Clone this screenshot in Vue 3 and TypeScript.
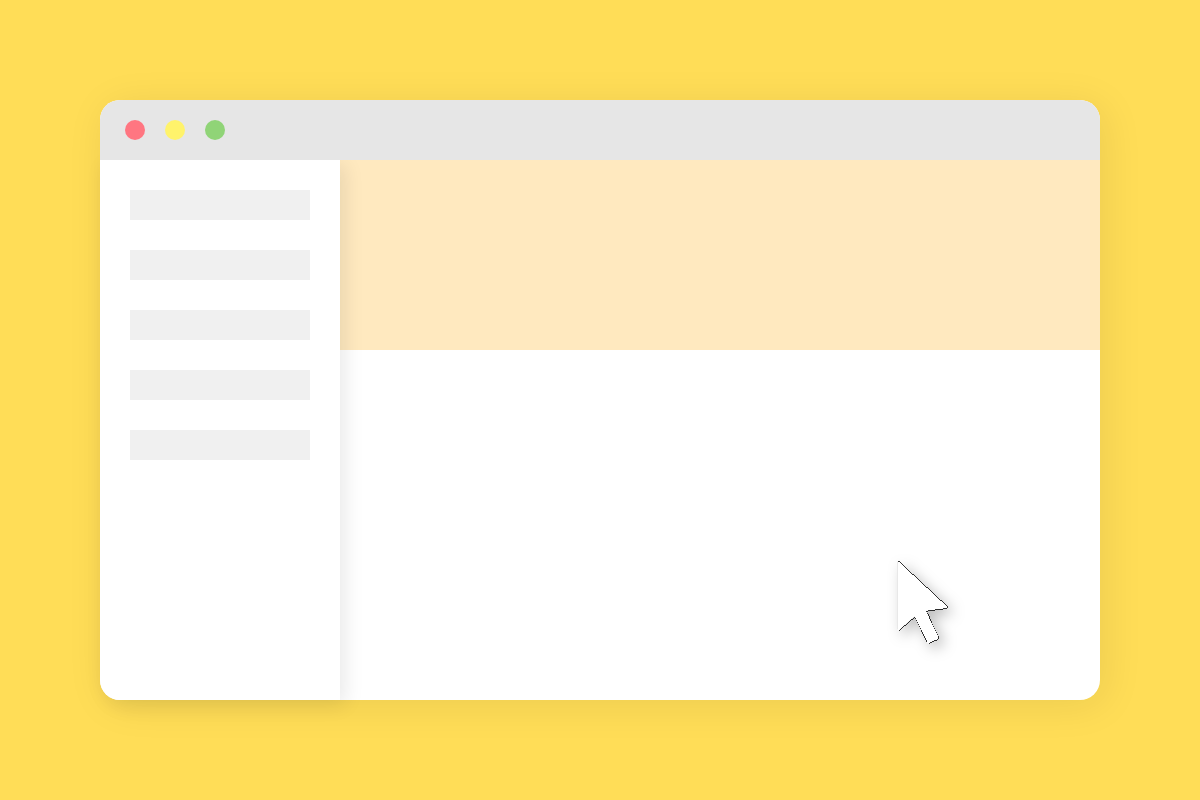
<script setup lang="ts">
const controls: string[] = ['close', 'minimize', 'expand']
const menuItems: number[] = [1, 2, 3, 4, 5]
</script>

<template>
  <main class="desktop">
    <section class="window">
      <header class="titlebar">
        <span v-for="c in controls" :key="c" class="dot" :class="c"></span>
      </header>
      <div class="body">
        <nav class="sidebar">
          <div v-for="i in menuItems" :key="i" class="item"></div>
        </nav>
        <div class="content">
          <div class="banner"></div>
        </div>
      </div>
    </section>
    <svg class="cursor" width="60" height="90" viewBox="0 0 60 90">
      <path
        d="M2 1.5 Q2.5 .5 4 1.5 L52.5 46.5 Q53.5 47.5 52 48.3 L31.5 51 L43.5 77 Q43.8 78.2 42.8 79.5 L34 83.4 Q32.8 83.8 32 82.5 L19.5 56.5 L3.5 70.3 Q2.1 71 2 69.5 Z"
        fill="#fff"
      />
      <path class="outline" d="M2.6 1.5 H4 L52.5 46.5 Q53.5 47.5 52 48.3 L31.5 51 M19.5 56.5 L3.5 70.3" />
      <path class="outline stem" d="M31.5 51 L43.5 77 Q43.8 78.2 42.8 79.5 L34 83.4 Q32.8 83.8 32 82.5 L19.5 56.5" />
      <path class="edge" d="M2.5 1.5 V69.5" />
    </svg>
  </main>
</template>

<style>
body {
  margin: 0;
}
</style>

<style scoped>
.desktop {
  position: relative;
  box-sizing: border-box;
  width: 1200px;
  height: 800px;
  padding: 100px;
  background: #ffdd57;
  overflow: hidden;
}
.window {
  display: flex;
  flex-direction: column;
  height: 600px;
  border-radius: 20px;
  background: #fff;
  box-shadow: 5px 5px 40px rgba(0, 0, 0, 0.08);
}
.titlebar {
  position: relative;
  z-index: 2;
  box-sizing: border-box;
  display: flex;
  align-items: center;
  gap: 20px;
  height: 60px;
  padding-left: 25px;
  background: #e6e6e6;
  border-radius: 20px 20px 0 0;
}
.dot {
  width: 20px;
  height: 20px;
  border-radius: 50%;
}
.close {
  background: #ff7681;
}
.minimize {
  background: #fff36b;
}
.expand {
  background: #90d477;
}
.body {
  display: flex;
  flex: 1;
}
.sidebar {
  position: relative;
  z-index: 1;
  box-sizing: border-box;
  display: flex;
  flex-direction: column;
  gap: 30px;
  width: 240px;
  padding: 30px;
  background: #fff;
  border-radius: 0 0 0 20px;
  box-shadow: 5px 5px 20px rgba(0, 0, 0, 0.09);
}
.item {
  height: 30px;
  background: #f0f0f0;
}
.content {
  flex: 1;
}
.banner {
  height: 190px;
  background: #ffe9bf;
}
.cursor {
  position: absolute;
  z-index: 3;
  left: 895px;
  top: 560px;
  overflow: visible;
  filter: drop-shadow(5px 5px 7px rgba(0, 0, 0, 0.25));
}
.outline {
  fill: none;
  stroke: #000;
  stroke-width: 0.8;
  shape-rendering: crispEdges;
}
.stem {
  stroke-dasharray: 1.6 0.7;
}
.edge {
  fill: none;
  stroke: #e8e8e8;
  stroke-width: 1;
}
</style>
